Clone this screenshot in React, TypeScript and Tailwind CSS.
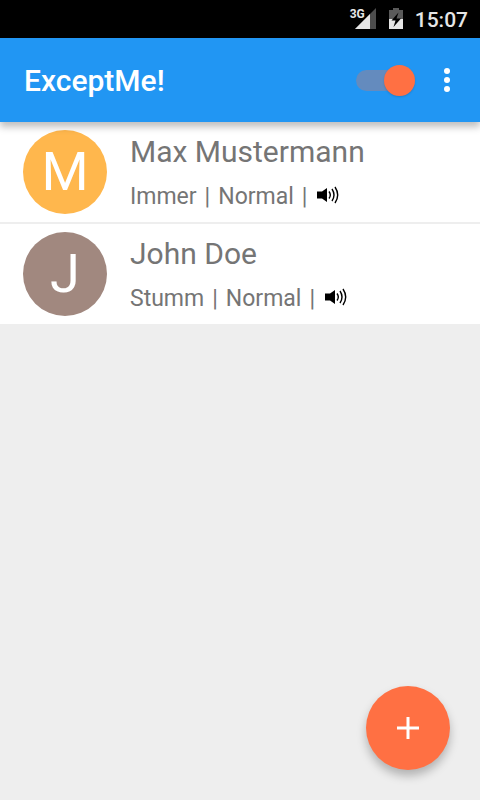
import { useState } from "react"

type Contact = {
  name: string
  ring: string
  mode: string
  color: string
}

const contacts: Contact[] = [
  { name: "Max Mustermann", ring: "Immer", mode: "Normal", color: "bg-[#ffb74d]" },
  { name: "John Doe", ring: "Stumm", mode: "Normal", color: "bg-[#a1887f]" },
]

function SignalIcon() {
  return (
    <svg width="22" height="22" viewBox="0 0 22 22" aria-hidden="true">
      <path d="M21 0v21H0z" fill="#4d4d4d" />
      <path d="M15 6v15H0z" fill="#e6e6e6" />
    </svg>
  )
}

function BatteryIcon() {
  return (
    <svg width="14" height="22" viewBox="0 0 14 22" aria-hidden="true">
      <path d="M4 0h6v2h4v9H0V2h4z" fill="#5a5a5a" />
      <path d="M0 11h14v10H0z" fill="#e6e6e6" />
      <path d="M9.5 4.5L2.5 12.5h4L4.5 19l7.5-8.5H7.5z" fill="#000" />
    </svg>
  )
}

function SpeakerIcon() {
  return (
    <svg width="23" height="18" viewBox="0 0 23 18" role="img" aria-label="Ton an">
      <path d="M0 5.5h5L10 2v14l-5-3.5H0z" fill="#000" />
      <g fill="none" stroke="#000" strokeWidth="1.4">
        <path d="M12 5.5q2.6 3.5 0 7" />
        <path d="M15 3q4 6 0 12" />
        <path d="M18 1q5.4 8 0 16" />
      </g>
    </svg>
  )
}

function StatusBar() {
  return (
    <div className="flex h-[38px] items-center justify-end bg-black pr-3 text-[#e6e6e6]">
      <div className="relative mr-3">
        <SignalIcon />
        <span className="absolute top-0 -left-[5px] text-[12px] leading-3 font-bold">3G</span>
      </div>
      <BatteryIcon />
      <span className="ml-3 pt-0.5 text-[21px] leading-6 font-medium">15:07</span>
    </div>
  )
}

function AppBar() {
  const [active, setActive] = useState(true)

  return (
    <header className="relative z-10 flex h-[84px] items-center bg-[#2196f3] pr-[21px] pl-6 shadow-[0_5px_7px_rgba(0,0,0,0.25)]">
      <h1 className="flex-1 pt-0.5 text-[30px] leading-9 font-medium text-white">ExceptMe!</h1>
      <label className="relative flex h-[31px] w-[59px] items-center">
        <input
          type="checkbox"
          role="switch"
          aria-label="ExceptMe! aktiv"
          checked={active}
          onChange={(e) => setActive(e.target.checked)}
          className="peer h-[21px] w-full appearance-none rounded-full bg-[#648bbe]"
        />
        <span className="pointer-events-none absolute left-0 size-[31px] rounded-full bg-gray-100 shadow-[0_1px_2px_rgba(0,0,0,0.15)] peer-checked:left-7 peer-checked:bg-[#ff7043]" />
      </label>
      <button type="button" aria-label="Weitere Optionen" className="ml-5 flex w-6 justify-center">
        <svg width="6" height="24" viewBox="0 0 6 24" fill="#fff">
          <circle cx="3" cy="3" r="3" />
          <circle cx="3" cy="12" r="3" />
          <circle cx="3" cy="21" r="3" />
        </svg>
      </button>
    </header>
  )
}

function ContactRow({ contact }: { contact: Contact }) {
  return (
    <li className="flex items-center gap-[23px] bg-white px-[23px] py-2">
      <div
        className={`flex size-[84px] shrink-0 items-center justify-center rounded-full text-[54px] leading-none text-white ${contact.color}`}
      >
        {contact.name[0]}
      </div>
      <div className="flex min-w-0 flex-col gap-2.5 text-[#757575]">
        <p className="text-[30px] leading-9">{contact.name}</p>
        <div className="flex items-center gap-2.5">
          <p className="flex gap-2 pt-1 text-[23px] leading-[26px]">
            <span>{contact.ring}</span>
            <span>|</span>
            <span>{contact.mode}</span>
            <span>|</span>
          </p>
          <SpeakerIcon />
        </div>
      </div>
    </li>
  )
}

export default function App() {
  return (
    <div className="min-h-screen bg-[#eeeeee] font-[Roboto,sans-serif]">
      <StatusBar />
      <AppBar />
      <ul className="flex flex-col gap-0.5">
        {contacts.map((contact) => (
          <ContactRow key={contact.name} contact={contact} />
        ))}
      </ul>
      <button
        type="button"
        aria-label="Kontakt hinzufügen"
        className="fixed right-[30px] bottom-[30px] flex size-[84px] items-center justify-center rounded-full bg-[#ff7043] shadow-[0_6px_10px_rgba(0,0,0,0.25)]"
      >
        <svg width="22" height="22" viewBox="0 0 22 22" fill="#fff">
          <path d="M9.5 0h3v9.5H22v3h-9.5V22h-3v-9.5H0v-3h9.5z" />
        </svg>
      </button>
    </div>
  )
}
